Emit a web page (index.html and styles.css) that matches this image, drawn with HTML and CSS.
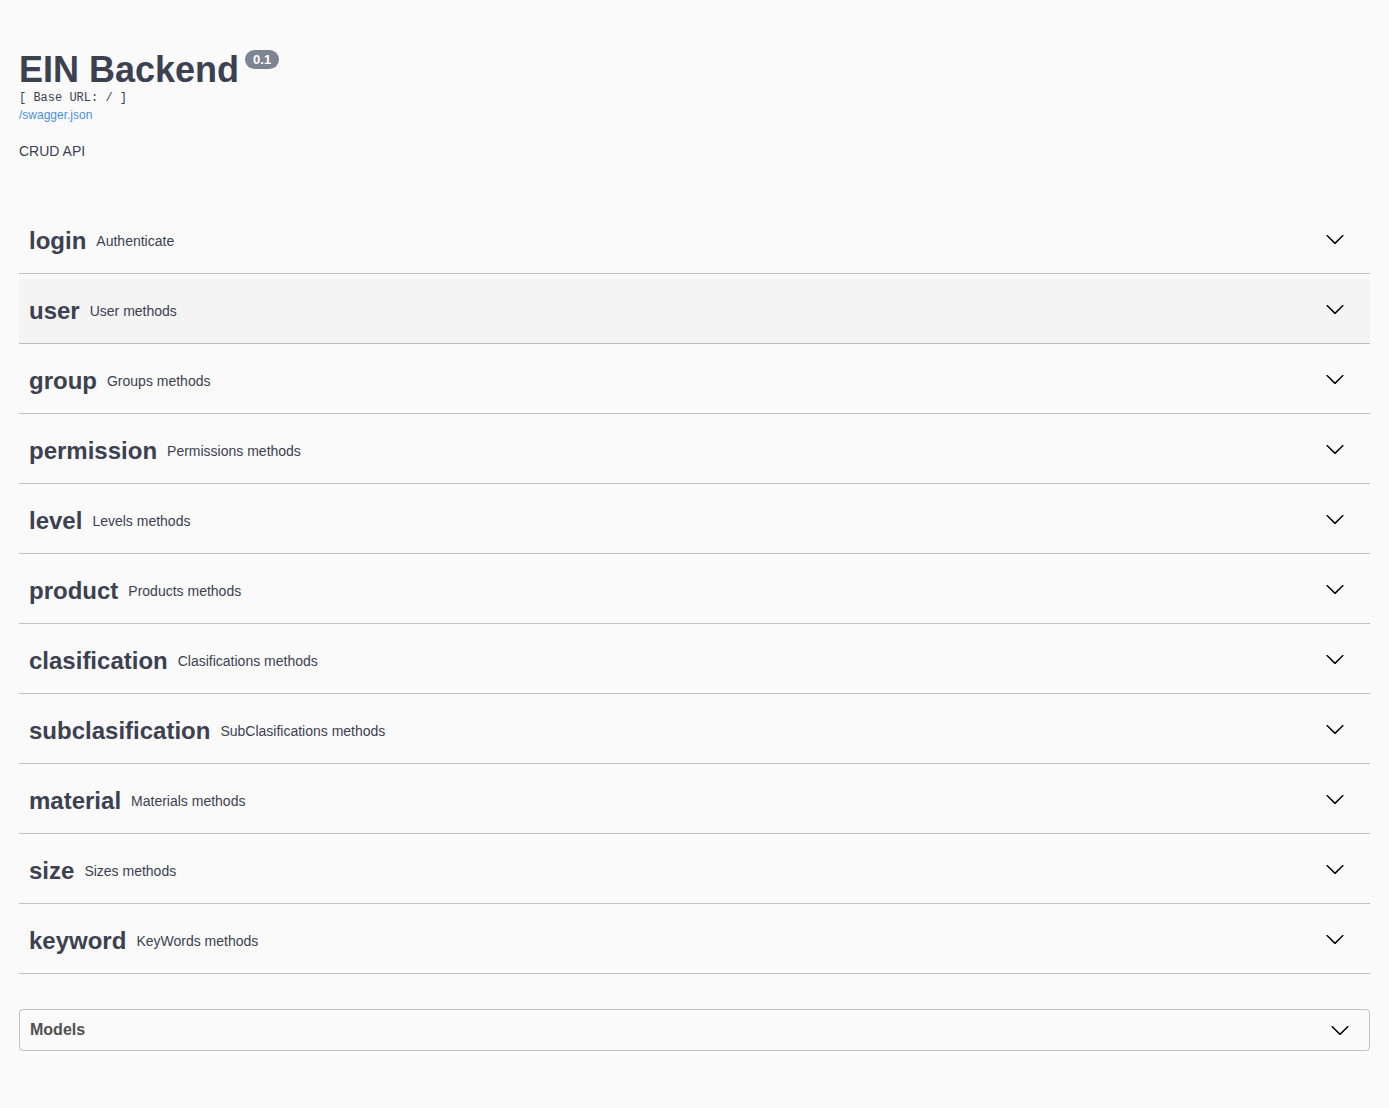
FILE: index.html
```html
<!DOCTYPE html>
<html>
<head>
<meta charset="utf-8">
<title>EIN Backend</title>
<link rel="stylesheet" href="styles.css">
</head>
<body>
<div class="wrapper">
  <div class="info">
    <h2 class="title">EIN Backend<span class="version">0.1</span></h2>
    <pre class="base-url">[ Base URL: / ]</pre>
    <a class="spec-link" href="#">/swagger.json</a>
    <p class="description">CRUD API</p>
  </div>

  <div class="tags">
    <div class="tag-section"><h4 class="tag"><span class="tag-name">login</span><small class="tag-desc">Authenticate</small><span class="arrow"><svg width="20" height="20" viewBox="0 0 20 20"><path d="M17.418 6.109c.272-.268.709-.268.979 0s.271.701 0 .969l-7.908 7.83c-.27.268-.707.268-.979 0l-7.908-7.83c-.27-.268-.27-.701 0-.969.271-.268.709-.268.979 0L10 13.25l7.418-7.141z"/></svg></span></h4></div>
    <div class="tag-section"><h4 class="tag hover"><span class="tag-name">user</span><small class="tag-desc">User methods</small><span class="arrow"><svg width="20" height="20" viewBox="0 0 20 20"><path d="M17.418 6.109c.272-.268.709-.268.979 0s.271.701 0 .969l-7.908 7.83c-.27.268-.707.268-.979 0l-7.908-7.83c-.27-.268-.27-.701 0-.969.271-.268.709-.268.979 0L10 13.25l7.418-7.141z"/></svg></span></h4></div>
    <div class="tag-section"><h4 class="tag"><span class="tag-name">group</span><small class="tag-desc">Groups methods</small><span class="arrow"><svg width="20" height="20" viewBox="0 0 20 20"><path d="M17.418 6.109c.272-.268.709-.268.979 0s.271.701 0 .969l-7.908 7.83c-.27.268-.707.268-.979 0l-7.908-7.83c-.27-.268-.27-.701 0-.969.271-.268.709-.268.979 0L10 13.25l7.418-7.141z"/></svg></span></h4></div>
    <div class="tag-section"><h4 class="tag"><span class="tag-name">permission</span><small class="tag-desc">Permissions methods</small><span class="arrow"><svg width="20" height="20" viewBox="0 0 20 20"><path d="M17.418 6.109c.272-.268.709-.268.979 0s.271.701 0 .969l-7.908 7.83c-.27.268-.707.268-.979 0l-7.908-7.83c-.27-.268-.27-.701 0-.969.271-.268.709-.268.979 0L10 13.25l7.418-7.141z"/></svg></span></h4></div>
    <div class="tag-section"><h4 class="tag"><span class="tag-name">level</span><small class="tag-desc">Levels methods</small><span class="arrow"><svg width="20" height="20" viewBox="0 0 20 20"><path d="M17.418 6.109c.272-.268.709-.268.979 0s.271.701 0 .969l-7.908 7.83c-.27.268-.707.268-.979 0l-7.908-7.83c-.27-.268-.27-.701 0-.969.271-.268.709-.268.979 0L10 13.25l7.418-7.141z"/></svg></span></h4></div>
    <div class="tag-section"><h4 class="tag"><span class="tag-name">product</span><small class="tag-desc">Products methods</small><span class="arrow"><svg width="20" height="20" viewBox="0 0 20 20"><path d="M17.418 6.109c.272-.268.709-.268.979 0s.271.701 0 .969l-7.908 7.83c-.27.268-.707.268-.979 0l-7.908-7.83c-.27-.268-.27-.701 0-.969.271-.268.709-.268.979 0L10 13.25l7.418-7.141z"/></svg></span></h4></div>
    <div class="tag-section"><h4 class="tag"><span class="tag-name">clasification</span><small class="tag-desc">Clasifications methods</small><span class="arrow"><svg width="20" height="20" viewBox="0 0 20 20"><path d="M17.418 6.109c.272-.268.709-.268.979 0s.271.701 0 .969l-7.908 7.83c-.27.268-.707.268-.979 0l-7.908-7.83c-.27-.268-.27-.701 0-.969.271-.268.709-.268.979 0L10 13.25l7.418-7.141z"/></svg></span></h4></div>
    <div class="tag-section"><h4 class="tag"><span class="tag-name">subclasification</span><small class="tag-desc">SubClasifications methods</small><span class="arrow"><svg width="20" height="20" viewBox="0 0 20 20"><path d="M17.418 6.109c.272-.268.709-.268.979 0s.271.701 0 .969l-7.908 7.83c-.27.268-.707.268-.979 0l-7.908-7.83c-.27-.268-.27-.701 0-.969.271-.268.709-.268.979 0L10 13.25l7.418-7.141z"/></svg></span></h4></div>
    <div class="tag-section"><h4 class="tag"><span class="tag-name">material</span><small class="tag-desc">Materials methods</small><span class="arrow"><svg width="20" height="20" viewBox="0 0 20 20"><path d="M17.418 6.109c.272-.268.709-.268.979 0s.271.701 0 .969l-7.908 7.83c-.27.268-.707.268-.979 0l-7.908-7.83c-.27-.268-.27-.701 0-.969.271-.268.709-.268.979 0L10 13.25l7.418-7.141z"/></svg></span></h4></div>
    <div class="tag-section"><h4 class="tag"><span class="tag-name">size</span><small class="tag-desc">Sizes methods</small><span class="arrow"><svg width="20" height="20" viewBox="0 0 20 20"><path d="M17.418 6.109c.272-.268.709-.268.979 0s.271.701 0 .969l-7.908 7.83c-.27.268-.707.268-.979 0l-7.908-7.83c-.27-.268-.27-.701 0-.969.271-.268.709-.268.979 0L10 13.25l7.418-7.141z"/></svg></span></h4></div>
    <div class="tag-section"><h4 class="tag"><span class="tag-name">keyword</span><small class="tag-desc">KeyWords methods</small><span class="arrow"><svg width="20" height="20" viewBox="0 0 20 20"><path d="M17.418 6.109c.272-.268.709-.268.979 0s.271.701 0 .969l-7.908 7.83c-.27.268-.707.268-.979 0l-7.908-7.83c-.27-.268-.27-.701 0-.969.271-.268.709-.268.979 0L10 13.25l7.418-7.141z"/></svg></span></h4></div>
  </div>

  <section class="models">
    <h4 class="models-title"><span>Models</span><svg width="20" height="20" viewBox="0 0 20 20"><path d="M17.418 6.109c.272-.268.709-.268.979 0s.271.701 0 .969l-7.908 7.83c-.27.268-.707.268-.979 0l-7.908-7.83c-.27-.268-.27-.701 0-.969.271-.268.709-.268.979 0L10 13.25l7.418-7.141z"/></svg></h4>
  </section>
</div>
</body>
</html>
```

FILE: styles.css
```css
html, body {
  margin: 0;
  padding: 0;
  background: #fafafa;
}

body {
  font-family: "Liberation Sans", Arial, sans-serif;
  color: #3b4151;
}

.wrapper {
  padding: 0 19px 0 19px;
  box-sizing: border-box;
}

.info {
  padding-top: 50px;
}

.title {
  margin: 0;
  font-size: 36px;
  line-height: 40px;
  font-weight: bold;
  color: #3b4151;
  display: flex;
  align-items: flex-start;
}

.version {
  display: inline-block;
  margin-left: 6px;
  padding: 2px 8px;
  border-radius: 57px;
  background: #7d8492;
  color: #fff;
  font-size: 13px;
  line-height: 15px;
  font-weight: bold;
}

.base-url {
  margin: 0;
  font-family: "Liberation Mono", "Courier New", monospace;
  font-size: 12px;
  line-height: 16px;
  color: #3b4151;
}

.spec-link {
  display: block;
  margin-top: 1px;
  font-size: 12px;
  line-height: 16px;
  color: #4990e2;
  text-decoration: none;
}

.description {
  margin: 18px 0 0 0;
  font-size: 14px;
  line-height: 20px;
  color: #3b4151;
}

.tags {
  margin-top: 48px;
}

.tag-section {
  display: flex;
  flex-direction: column;
}

.tag {
  display: flex;
  align-items: center;
  box-sizing: border-box;
  height: 65px;
  margin: 0 0 5px 0;
  padding: 0 25px 0 10px;
  border-bottom: 1px solid rgba(59, 65, 81, 0.3);
  font-size: 24px;
  font-weight: bold;
  color: #3b4151;
  cursor: pointer;
}

.tag.hover {
  background: rgba(0, 0, 0, 0.025);
}

.tag-name {
  line-height: 30px;
}

.tag-desc {
  flex: 1;
  padding: 0 10px;
  font-size: 14px;
  font-weight: normal;
  line-height: 20px;
  color: #3b4151;
}

.arrow {
  display: flex;
  width: 20px;
  height: 20px;
  padding-bottom: 4px;
}

.arrow svg,
.models-title svg {
  fill: #000;
}

.models {
  margin: 30px 0;
  border: 1px solid rgba(59, 65, 81, 0.3);
  border-radius: 4px;
}

.models-title {
  display: flex;
  align-items: center;
  justify-content: space-between;
  box-sizing: border-box;
  height: 40px;
  margin: 0;
  padding: 0 19px 0 10px;
  font-size: 16px;
  font-weight: bold;
  color: #505050;
}
```
